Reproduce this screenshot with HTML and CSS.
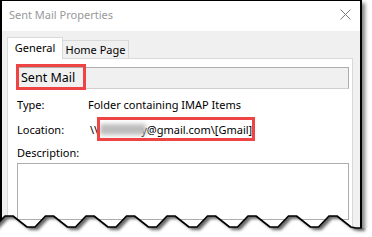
FILE: index.html
```html
<!DOCTYPE html>
<html lang="en">
<head>
    <meta charset="UTF-8">
    <title>Sent Mail Properties</title>
    <link rel="stylesheet" href="styles.css">
</head>
<body>
    <!-- 整个窗口 -->
    <div class="window">
        <div class="titlebar">
            <span class="title">Sent Mail Properties</span>
            <svg class="close" width="11" height="11" viewBox="0 0 11 11">
                <path d="M0.5 0.5L10.5 10.5M10.5 0.5L0.5 10.5" stroke="#7a7a7a" stroke-width="1" fill="none"/>
            </svg>
        </div>
        <div class="body">
            <!-- 标签页 -->
            <div class="tabs">
                <div class="tab active">General</div>
                <div class="tab">Home Page</div>
            </div>
            <div class="panel">
                <div class="namebox">Sent Mail</div>
                <div class="row"><span class="label">Type:</span><span>Folder containing IMAP Items</span></div>
                <div class="row loc-row"><span class="label">Location:</span><span class="loc">\\<span class="blur"></span>y@gmail.com\[Gmail]</span></div>
                <div class="row desc"><span class="label">Description:</span></div>
                <div class="textarea"></div>
            </div>
        </div>
        <!-- 红框标注 -->
        <div class="mark mark-name"></div>
        <div class="mark mark-loc"></div>
    </div>

    <!-- 撕纸边 -->
    <svg class="torn" width="372" height="25" viewBox="0 0 372 25">
        <defs>
            <filter id="soft" x="-5%" y="-50%" width="110%" height="200%">
                <feGaussianBlur stdDeviation="1.4"/>
            </filter>
            <clipPath id="below">
                <path d="M-10 15 L-5.5 15 L5 4 L13 4 L27 15 L35 15 L45.5 4 L53.5 4 L67.5 15 L75.5 15 L86 4 L94 4 L108 15 L116 15 L126.5 4 L134.5 4 L148.5 15 L156.5 15 L167 4 L175 4 L189 15 L197 15 L207.5 4 L215.5 4 L229.5 15 L237.5 15 L248 4 L256 4 L270 15 L278 15 L288.5 4 L296.5 4 L310.5 15 L318.5 15 L329 4 L337 4 L351 15 L356 16 L361 16 L380 16 L380 30 L-10 30 Z"/>
            </clipPath>
        </defs>
        <g clip-path="url(#below)">
            <rect x="-10" y="-5" width="392" height="35" fill="#fff"/>
            <path transform="translate(3 3)" filter="url(#soft)" fill="rgba(0,0,0,0.6)" d="M-10 -20 L-10 15 L-5.5 15 L5 4 L13 4 L27 15 L35 15 L45.5 4 L53.5 4 L67.5 15 L75.5 15 L86 4 L94 4 L108 15 L116 15 L126.5 4 L134.5 4 L148.5 15 L156.5 15 L167 4 L175 4 L189 15 L197 15 L207.5 4 L215.5 4 L229.5 15 L237.5 15 L248 4 L256 4 L270 15 L278 15 L288.5 4 L296.5 4 L310.5 15 L318.5 15 L329 4 L337 4 L351 15 L356 16 L362 16 L362 -20 Z"/>
        </g>
        <path fill="none" stroke="#000" stroke-width="1.6" stroke-linejoin="round" d="M-5.5 15 L5 4 L13 4 L27 15 L35 15 L45.5 4 L53.5 4 L67.5 15 L75.5 15 L86 4 L94 4 L108 15 L116 15 L126.5 4 L134.5 4 L148.5 15 L156.5 15 L167 4 L175 4 L189 15 L197 15 L207.5 4 L215.5 4 L229.5 15 L237.5 15 L248 4 L256 4 L270 15 L278 15 L288.5 4 L296.5 4 L310.5 15 L318.5 15 L329 4 L337 4 L351 15 L356 16 L361 16 L361 0"/>
    </svg>
</body>
</html>
```

FILE: styles.css
```css
/* 页面 */
body{
    margin: 0;
    width: 372px;
    height: 237px;
    overflow: hidden;
    background-color: #fff;
    position: relative;
    font-family: "Noto Sans", "Liberation Sans", sans-serif;
    font-size: 11px;
    color: #000;
}
/* 窗口 */
.window{
    width: 362px;
    height: 237px;
    box-sizing: border-box;
    border-top: 1px solid #000;
    border-left: 2px solid #000;
    border-right: 2px solid #000;
    position: relative;
    overflow: hidden;
    box-shadow: 3px 3px 4px rgba(0, 0, 0, 0.5);
    background-color: #f0f0f0;
}
/* 左上角边线淡出 */
.window::before{
    content: "";
    position: absolute;
    top: -1px;
    left: -2px;
    width: 170px;
    height: 1px;
    background: linear-gradient(to right, #fff 0, #fff 55%, rgba(255, 255, 255, 0) 100%);
}
.window::after{
    content: "";
    position: absolute;
    top: -1px;
    left: -2px;
    width: 2px;
    height: 80px;
    background: linear-gradient(to bottom, #fff 0, #fff 35%, rgba(255, 255, 255, 0) 100%);
}
/* 标题栏 */
.titlebar{
    height: 30px;
    box-sizing: border-box;
    background-color: #fff;
    display: flex;
    justify-content: space-between;
    align-items: flex-start;
    padding: 6px 9px 0 7px;
    line-height: 16px;
    font-size: 11px;
}
.title{
    color: #999;
}
.close{
    margin-top: 2px;
}
/* 主体 */
.body{
    padding: 6px 7px 0 5px;
}
.tabs{
    display: flex;
    align-items: flex-end;
}
.tab{
    height: 18px;
    box-sizing: border-box;
    border: 1px solid #d9d9d9;
    border-bottom: none;
    background-color: #f0f0f0;
    line-height: 17px;
    text-align: center;
    white-space: nowrap;
    width: 67px;
    margin-left: -1px;
}
.tab.active{
    width: 56px;
    height: 22px;
    margin-left: 0;
    margin-bottom: -1px;
    line-height: 20px;
    background-color: #fff;
    position: relative;
    z-index: 1;
}
.panel{
    border: 1px solid #d9d9d9;
    background-color: #fff;
    padding: 8px 3px 20px 9px;
}
.namebox{
    width: 332px;
    height: 22px;
    box-sizing: border-box;
    border: 1px solid #adadad;
    border-bottom-color: #cfcfcf;
    background-color: #f0f0f0;
    padding-left: 3px;
    line-height: 20px;
    font-size: 12.5px;
}
.row{
    display: flex;
    line-height: 16px;
    margin-top: 8px;
}
.loc-row{
    margin-top: 9px;
}
.row.desc{
    margin-top: 7px;
}
.label{
    width: 71px;
    flex: none;
}
.loc{
    white-space: nowrap;
    padding-left: 2px;
}
/* 打码 */
.blur{
    display: inline-block;
    width: 46px;
    height: 11px;
    vertical-align: -1px;
    margin: 0 -5px 0 2px;
    background-color: #bdbdbd;
    filter: blur(2px);
}
.textarea{
    width: 332px;
    height: 57px;
    box-sizing: border-box;
    border: 1px solid #adadad;
    margin-top: 2px;
}
/* 红框 */
.mark{
    position: absolute;
    border: 3px solid #ee4444;
    box-sizing: border-box;
    z-index: 5;
}
.mark-name{
    left: 14px;
    top: 63px;
    width: 70px;
    height: 26px;
}
.mark-loc{
    left: 95px;
    top: 116px;
    width: 158px;
    height: 24px;
}
.torn{
    position: absolute;
    left: 0;
    bottom: 0;
    z-index: 10;
}
```
